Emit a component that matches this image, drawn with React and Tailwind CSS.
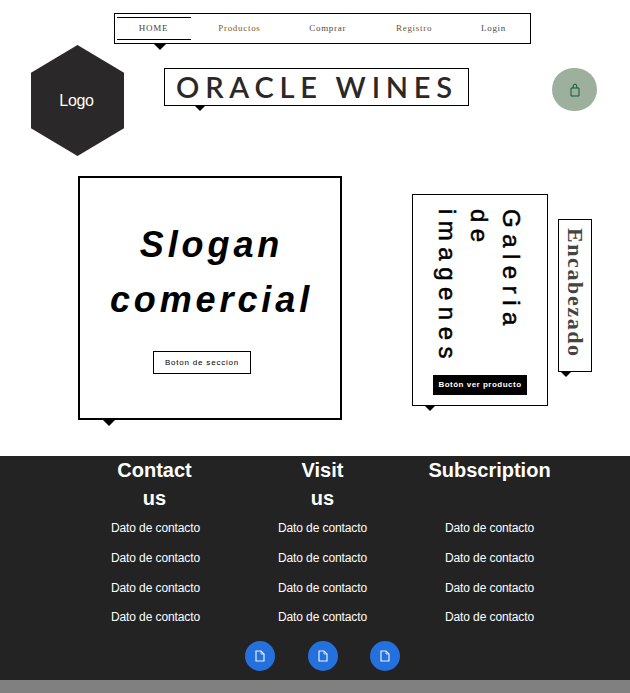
const Tip = ({ className }) => (
  <div className={`absolute w-0 h-0 border-l-[6px] border-r-[6px] border-t-[6px] border-l-transparent border-r-transparent border-t-black ${className}`} />
);

const navItems = [
  ["Productos", "w-[95px] pl-[4px]", "text-[#7d5a2c]"],
  ["Comprar", "w-[88px]", "text-[#4a4a44]"],
  ["Registro", "w-[85px] pl-[2px]", "text-[#73552b]"],
  ["Login", "w-[76px] pl-[2px]", "text-[#4a4a44]"],
];

const FileIcon = () => (
  <svg width="10" height="12" viewBox="0 0 10 12" fill="none" stroke="#e8f0fc" strokeWidth="1.2">
    <path d="M1 1h5l3 3v7H1z" />
    <path d="M6 1v3h3" strokeWidth="0.8" />
  </svg>
);

const Column = ({ title, width }) => (
  <div className="w-[167px] flex flex-col items-center text-white">
    <h3 className={`${width} h-[56px] text-center text-[20px] leading-[28px] font-bold`}>{title}</h3>
    <div className="mt-[6px] flex flex-col gap-[10px] text-[12px] leading-[20px] tracking-[-0.1px]">
      <p>Dato de contacto</p>
      <p>Dato de contacto</p>
      <p>Dato de contacto</p>
      <p className="-mt-[1px]">Dato de contacto</p>
    </div>
  </div>
);

export default function App() {
  return (
    <div className="w-[630px] h-[693px] overflow-hidden bg-white font-['Liberation_Sans',sans-serif]">
      <header className="h-[176px] pt-[13px]">
        <nav className="relative ml-[114px] w-[417px] h-[31px] border-[1.5px] border-black flex items-center pl-[1.5px] font-['Liberation_Serif',serif] text-[9px] tracking-[0.7px]">
          <a className="w-[75px] h-[23px] flex items-center justify-center border-y border-black text-[#444]">HOME</a>
          {navItems.map(([t, w, c]) => (
            <a key={t} className={`${w} flex justify-center ${c}`}>{t}</a>
          ))}
          <Tip className="left-[39px] -bottom-[7px]" />
        </nav>
        <div className="flex items-start pl-[31px] mt-[1px]">
          <div className="w-[93px] h-[111px] bg-[#2a2828] pr-[2px] [clip-path:polygon(50%_0,100%_25%,100%_75%,50%_100%,0_75%,0_25%)] flex items-center justify-center text-white text-[16px] tracking-[-0.3px]">
            Logo
          </div>
          <div className="relative ml-[40px] mt-[23px] w-[305px] h-[38px] border border-black flex items-center pl-[11px] font-['Lato',sans-serif] text-[29px] font-semibold tracking-[5.8px] text-[#2a2828] whitespace-nowrap">
            ORACLE WINES
            <Tip className="left-[29px] -bottom-[6px]" />
          </div>
          <div className="ml-[83px] mt-[23px] w-[45px] h-[43px] rounded-full bg-[#9db09d] flex items-center justify-center">
            <svg width="10" height="14" viewBox="0 0 10 14" fill="none" stroke="#0f5a3a" strokeWidth="1">
              <path d="M1 5h8v8H1z" />
              <path d="M3.2 5V3a1.8 1.8 0 0 1 3.6 0v2" />
            </svg>
          </div>
        </div>
      </header>

      <main className="h-[280px] flex items-start pl-[78px]">
        <section className="relative w-[264px] h-[244px] border-2 border-black flex flex-col items-center">
          <h1 className="mt-[39px] pl-[3px] text-center text-[36px] leading-[55px] font-bold italic tracking-[3.9px] text-black">
            Slogan<br />comercial
          </h1>
          <button className="mt-[24px] self-start ml-[73px] w-[98px] h-[23px] border border-black text-[8px] tracking-[0.8px] text-black">
            Boton de seccion
          </button>
          <Tip className="left-[23px] -bottom-[8px]" />
        </section>

        <section className="relative ml-[70px] mt-[18px] w-[136px] h-[212px] border border-black">
          <h2 className="absolute right-[20px] top-[14px] [writing-mode:vertical-rl] text-[24px] leading-[32px] tracking-[6.5px] font-medium text-black whitespace-nowrap [-webkit-text-stroke:0.5px_black]">
            Galeria<br />de<br />imagenes
          </h2>
          <button className="absolute left-[20px] top-[180px] w-[94px] h-[20px] bg-black text-white text-[8px] font-bold tracking-[0.5px]">
            Botón ver producto
          </button>
          <Tip className="left-[11px] -bottom-[6px]" />
        </section>

        <section className="relative ml-[10px] mt-[43px] w-[34px] h-[153px] border border-black flex items-center justify-center pb-[6px]">
          <h2 className="[writing-mode:vertical-rl] font-['Liberation_Serif',serif] text-[22px] font-bold tracking-[1.6px] text-[#444]">
            Encabezado
          </h2>
          <Tip className="left-[1px] -bottom-[6px]" />
        </section>
      </main>

      <footer className="h-[224px] bg-[#232323] pl-[72px]">
        <div className="flex">
          <Column title="Contact us" width="w-[90px] pr-[2px]" />
          <Column title="Visit us" width="w-[60px]" />
          <Column title="Subscription" width="w-[140px]" />
        </div>
        <div className="mt-[14px] ml-[173px] flex gap-[32.5px]">
          {[0, 1, 2].map((i) => (
            <div key={i} className="w-[30px] h-[30px] rounded-full bg-[#2470dc] flex items-center justify-center">
              <FileIcon />
            </div>
          ))}
        </div>
      </footer>
      <div className="h-[13px] bg-[#808080]" />
    </div>
  );
}
